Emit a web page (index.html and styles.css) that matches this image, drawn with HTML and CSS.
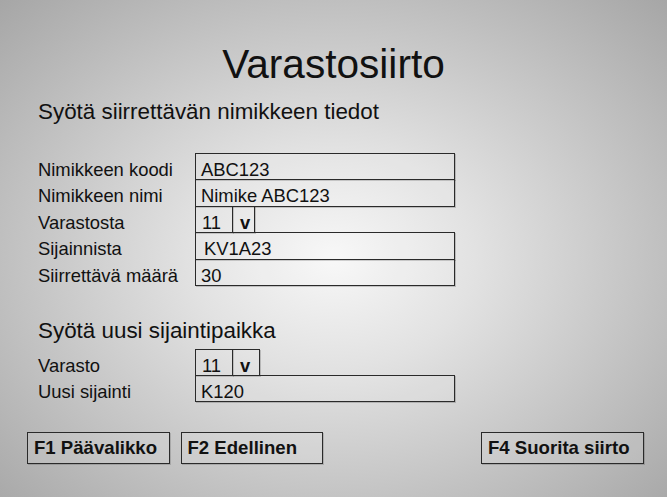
FILE: index.html
```html
<!DOCTYPE html>
<html lang="fi">
<head>
<meta charset="utf-8">
<title>Varastosiirto</title>
<link rel="stylesheet" href="styles.css">
</head>
<body>
<div class="screen">
  <h1 class="title">Varastosiirto</h1>
  <div class="content">
    <h2 class="section first">Syötä siirrettävän nimikkeen tiedot</h2>
    <div class="form">
      <div class="row"><span class="label">Nimikkeen koodi</span><span class="box field">ABC123</span></div>
      <div class="row"><span class="label">Nimikkeen nimi</span><span class="box field">Nimike ABC123</span></div>
      <div class="row"><span class="label">Varastosta</span><span class="select"><span class="box cell-val">11</span><span class="box cell-btn">v</span></span></div>
      <div class="row"><span class="label">Sijainnista</span><span class="box field wide-pad">KV1A23</span></div>
      <div class="row"><span class="label">Siirrettävä määrä</span><span class="box field">30</span></div>
    </div>
    <h2 class="section second">Syötä uusi sijaintipaikka</h2>
    <div class="form">
      <div class="row"><span class="label">Varasto</span><span class="select"><span class="box cell-val">11</span><span class="box cell-btn cell-btn-wide">v</span></span></div>
      <div class="row"><span class="label">Uusi sijainti</span><span class="box field">K120</span></div>
    </div>
  </div>
  <div class="buttons">
    <button class="fkey f1">F1 Päävalikko</button>
    <button class="fkey f2">F2 Edellinen</button>
    <button class="fkey f4">F4 Suorita siirto</button>
  </div>
</div>
</body>
</html>
```
FILE: styles.css
```css
html, body {
  margin: 0;
  padding: 0;
  height: 100%;
}
body {
  font-family: "Liberation Sans", Arial, sans-serif;
  color: #111;
  background: radial-gradient(ellipse farthest-corner at 50% 52%, #f7f7f7 0%, #e2e2e2 30%, #c4c4c4 65%, #a6a6a6 100%);
  overflow: hidden;
}
.screen {
  width: 667px;
  height: 497px;
  box-sizing: border-box;
  padding-top: 41px;
}
.title {
  margin: 0;
  font-size: 40.6px;
  line-height: 46px;
  font-weight: normal;
  text-align: center;
}
.content {
  padding-left: 38px;
}
.section {
  margin: 0;
  font-size: 22.4px;
  line-height: 26px;
  font-weight: normal;
}
.section.first {
  margin-top: 12px;
  margin-bottom: 28px;
}
.section.second {
  margin-top: 33px;
  margin-bottom: 4.6px;
}
.form {
  display: flex;
  flex-direction: column;
}
.row {
  display: flex;
  align-items: flex-start;
  height: 26.4px;
  font-size: 18.4px;
}
.label {
  width: 157px;
  flex: none;
  padding-top: 8px;
  line-height: 18.4px;
  white-space: nowrap;
}
.box {
  box-sizing: border-box;
  height: 27.4px;
  border: 1px solid #2a2a2a;
  padding: 7px 0 0 5px;
  line-height: 18.4px;
  background: rgba(255, 255, 255, 0.1);
  box-shadow: 1px 1px 0 rgba(0, 0, 0, 0.18);
  white-space: nowrap;
}
.field {
  width: 260px;
}
.wide-pad {
  padding-left: 8px;
}
.select {
  display: flex;
}
.cell-val {
  width: 38.4px;
  padding-left: 6px;
}
.cell-btn {
  width: 22.4px;
  margin-left: -1px;
  padding-left: 6.5px;
  font-weight: bold;
}
.cell-btn-wide {
  width: 27.4px;
}
.buttons {
  display: flex;
  margin-top: 31px;
  padding-left: 27px;
  padding-right: 23px;
  gap: 11px;
}
.fkey {
  box-sizing: border-box;
  height: 32px;
  margin: 0;
  border: 1px solid #2a2a2a;
  background: rgba(255, 255, 255, 0.12);
  box-shadow: 1px 1px 0 rgba(0, 0, 0, 0.15);
  font-family: "Liberation Sans", Arial, sans-serif;
  font-size: 18.6px;
  font-weight: bold;
  line-height: 30px;
  color: #111;
  padding: 0 6px;
  text-align: left;
  white-space: nowrap;
}
.f1 {
  width: 142.5px;
}
.f2 {
  width: 142px;
}
.f4 {
  width: 163px;
  margin-left: auto;
}
```
